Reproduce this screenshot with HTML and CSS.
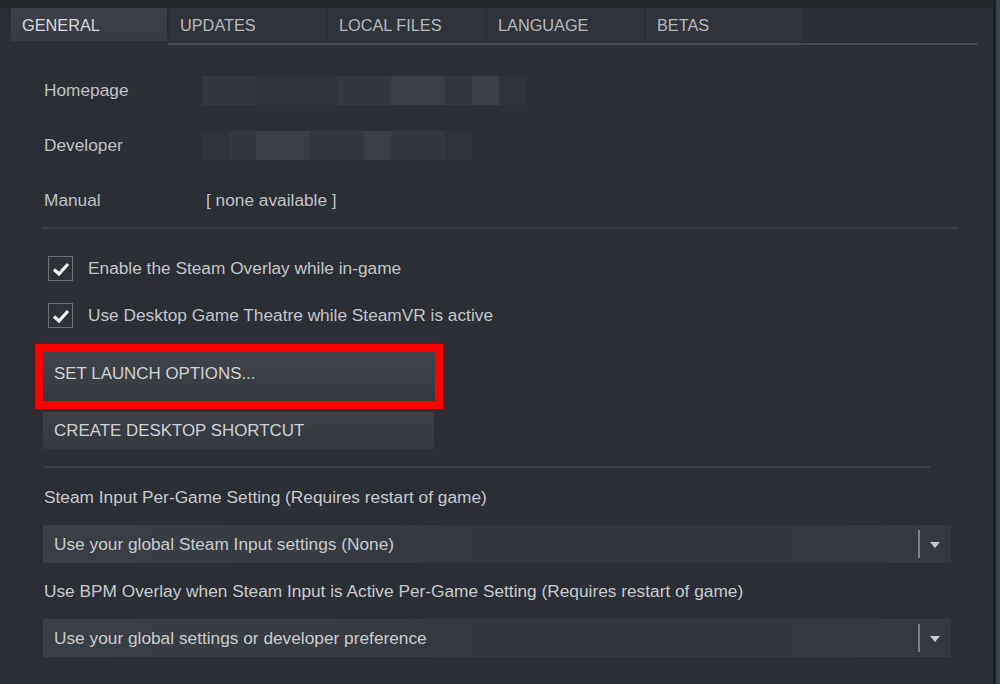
FILE: index.html
```html
<!DOCTYPE html>
<html lang="en">
<head>
    <meta charset="UTF-8">
    <meta name="viewport" content="width=device-width, initial-scale=1.0">
    <title>game-properties</title>
    <link rel="stylesheet" href="styles.css">
</head>
<body>
    <div class="window">
        <div class="tab-bar">
            <div class="tab active">GENERAL</div>
            <div class="tab">UPDATES</div>
            <div class="tab">LOCAL FILES</div>
            <div class="tab">LANGUAGE</div>
            <div class="tab">BETAS</div>
        </div>
        <div class="tab-rule"></div>

        <div class="content">
            <div class="info-row">
                <div class="info-label">Homepage</div>
                <div class="mosaic">
                    <span class="px b"></span><span class="px b"></span><span class="px a"></span><span class="px a"></span>
                    <span class="px a"></span><span class="px b"></span><span class="px b"></span><span class="px c"></span>
                    <span class="px c"></span><span class="px b"></span><span class="px c"></span><span class="px a"></span>
                </div>
            </div>
            <div class="info-row">
                <div class="info-label">Developer</div>
                <div class="mosaic">
                    <span class="px a"></span><span class="px b"></span><span class="px c"></span><span class="px c"></span>
                    <span class="px b"></span><span class="px b"></span><span class="px c"></span><span class="px b"></span>
                    <span class="px b"></span><span class="px a"></span>
                </div>
            </div>
            <div class="info-row">
                <div class="info-label">Manual</div>
                <div class="info-value">[ none available ]</div>
            </div>

            <div class="rule"></div>

            <div class="check-row">
                <span class="checkbox">
                    <svg width="18" height="16" viewBox="0 0 18 16"><path d="M2 8.5 L7 13 L16 3" fill="none" stroke="#f2f3f4" stroke-width="3.2"/></svg>
                </span>
                <span>Enable the Steam Overlay while in-game</span>
            </div>
            <div class="check-row">
                <span class="checkbox">
                    <svg width="18" height="16" viewBox="0 0 18 16"><path d="M2 8.5 L7 13 L16 3" fill="none" stroke="#f2f3f4" stroke-width="3.2"/></svg>
                </span>
                <span>Use Desktop Game Theatre while SteamVR is active</span>
            </div>

            <button class="btn btn-launch">SET LAUNCH OPTIONS...</button>
            <button class="btn btn-shortcut">CREATE DESKTOP SHORTCUT</button>

            <div class="rule rule-short"></div>

            <div class="field-label">Steam Input Per-Game Setting (Requires restart of game)</div>
            <div class="dropdown">
                <span class="dropdown-text">Use your global Steam Input settings (None)</span>
                <span class="dropdown-split"></span>
                <span class="dropdown-arrow"></span>
            </div>

            <div class="field-label">Use BPM Overlay when Steam Input is Active Per-Game Setting (Requires restart of game)</div>
            <div class="dropdown">
                <span class="dropdown-text">Use your global settings or developer preference</span>
                <span class="dropdown-split"></span>
                <span class="dropdown-arrow"></span>
            </div>
        </div>
    </div>
</body>
</html>
```

FILE: styles.css
```css
html {
    background-color: #34464c;
}

body {
    margin: 0;
    font-family: "Liberation Sans", Arial, sans-serif;
    font-size: 17.3px;
    color: #c4c7cb;
}

.window {
    width: 993px;
    height: 684px;
    background-color: #2b2e34;
    border-right: 3px solid #1c1e22;
    overflow: hidden;
}

.tab-bar {
    display: flex;
    gap: 2px;
    padding: 8px 0 0 11px;
    background: linear-gradient(#24272b 0, #24272b 8px, #2b2e34 8px);
}

.tab {
    width: 157px;
    height: 33px;
    box-sizing: border-box;
    padding: 8px 0 0 11px;
    background-color: #30333a;
    color: #b6b9be;
    font-size: 16.3px;
}

.tab.active {
    width: 156px;
    background: linear-gradient(#3e4148, #373a40);
    color: #d8dadd;
}

.tab-rule {
    height: 2px;
    margin: 2px 16px 0 168px;
    background-color: #464a51;
}

.content {
    padding: 18px 0 0 44px;
}

.info-row {
    display: flex;
    align-items: center;
    height: 55px;
}

.info-row:nth-child(3) {
    height: 54px;
}

.info-label {
    width: 158px;
    color: #bfc2c6;
}

.info-value {
    padding-left: 4px;
    color: #c0c3c7;
}

.mosaic {
    display: flex;
    height: 29px;
}

.px {
    width: 27px;
    height: 29px;
}

.px.a { background-color: #2f3238; }
.px.b { background-color: #34383e; }
.px.c { background-color: #3b3f45; }

.rule {
    width: 916px;
    height: 2px;
    margin-left: -2px;
    background-color: #393d44;
}

.rule-short {
    width: 887px;
    margin: 17px 0 0 -1px;
}

.check-row {
    display: flex;
    align-items: center;
    height: 47px;
    color: #c3c6ca;
}

.rule + .check-row {
    margin-top: 16px;
}

.checkbox {
    display: flex;
    align-items: center;
    justify-content: center;
    width: 23px;
    height: 23px;
    margin: 0 15px 0 4px;
    border: 1px solid #6c7077;
    background-color: #2f3238;
}

.btn {
    display: block;
    margin-left: -1px;
    padding: 0 0 0 11px;
    border: none;
    font-family: "Liberation Sans", Arial, sans-serif;
    font-size: 16.9px;
    color: #d0d2d5;
    text-align: left;
    background: linear-gradient(#40444b, #363a40);
}

.btn-launch {
    width: 392px;
    height: 49px;
    margin-top: 13px;
    padding-bottom: 5px;
    outline: 8px solid #ff0000;
    box-shadow: 0 0 3px 9px rgba(200, 0, 0, 0.35);
}

.btn-shortcut {
    width: 391px;
    height: 37px;
    margin-top: 11px;
    background: linear-gradient(#3c4047, #34383e);
}

.field-label {
    margin-top: 19px;
    height: 20px;
    color: #c8cacd;
}

.dropdown {
    display: flex;
    align-items: center;
    width: 908px;
    height: 38px;
    margin: 18px 0 0 -1px;
    background: linear-gradient(90deg, #3a3e45, #33373d 60%, #363a40);
}

.dropdown + .field-label {
    margin-top: 18px;
}

.dropdown-text {
    flex: 1;
    padding-left: 11px;
    color: #c9cbce;
}

.dropdown-split {
    width: 2px;
    height: 28px;
    background-color: #7d8187;
}

.dropdown-arrow {
    width: 0;
    height: 0;
    margin: 2px 11px 0 10px;
    border-left: 5px solid transparent;
    border-right: 5px solid transparent;
    border-top: 6px solid #c8cacd;
}
```
